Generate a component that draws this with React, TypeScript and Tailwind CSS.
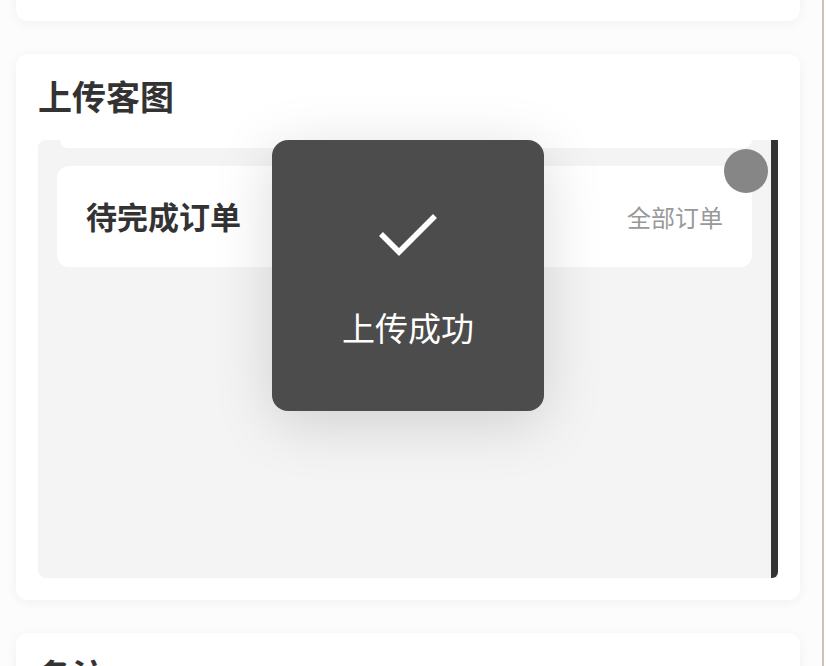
export default function App() {
  return (
    <div
      className="relative h-screen w-full overflow-hidden bg-[#fcfcfc] flex"
      style={{ fontFamily: '"Noto Sans CJK SC", "Noto Sans", sans-serif' }}
    >
      {/* 页面内容 */}
      <div className="w-[822px] flex flex-col gap-[33px] pl-4 pr-[22px] -mt-[179px]">
        {/* 上一张卡片，只露出底边 */}
        <div className="h-[200px] shrink-0 bg-white rounded-xl shadow-[0_2px_12px_rgba(0,0,0,0.05)]" />

        {/* 上传客图 */}
        <div className="shrink-0 bg-white rounded-xl shadow-[0_2px_12px_rgba(0,0,0,0.05)] pt-[22px] px-[22px] pb-[22px]">
          <h2 className="text-[34px] leading-[40px] font-bold text-[#333]">上传客图</h2>
          <div className="mt-[24px] h-[438px] flex rounded-l-lg overflow-hidden bg-[#f4f4f4]">
            <div className="flex-1 flex flex-col px-[19px]">
              <div className="h-[8px] ml-[3px] bg-white rounded-b-xl" />
              <div className="mt-[18px] h-[101px] bg-white rounded-xl flex items-center justify-between pl-[29px] pr-[29px]">
                <span className="text-[31px] font-bold text-[#333]">待完成订单</span>
                <span className="text-[24px] text-[#999]">全部订单</span>
              </div>
            </div>
            <div className="w-[7px] bg-[#333] rounded-br-md" />
          </div>
        </div>

        {/* 备注 */}
        <div className="h-[200px] shrink-0 bg-white rounded-xl shadow-[0_2px_12px_rgba(0,0,0,0.05)] pt-[22px] px-[22px]">
          <h2 className="text-[34px] leading-[40px] font-bold text-[#333]">备注</h2>
        </div>
      </div>

      {/* 页面滚动条边线 */}
      <div className="w-[2px] bg-[#cbc4b4]" />
      <div className="flex-1 bg-white" />

      {/* 悬浮按钮 */}
      <div className="absolute left-[724px] top-[149px] w-[44px] h-[44px] rounded-full bg-[#7f7f7f]/95" />

      {/* 上传成功提示 */}
      <div className="absolute left-[272px] top-[140px] w-[272px] h-[271px] rounded-2xl bg-[#4c4c4c] shadow-[0_12px_60px_rgba(0,0,0,0.15)] flex flex-col items-center">
        <svg width="70" height="50" viewBox="0 0 70 50" className="mt-[72px]">
          <path d="M8 22 L26 40 L62 4" fill="none" stroke="white" strokeWidth="5.5" strokeLinecap="butt" />
        </svg>
        <span className="mt-[45px] text-[33px] leading-[40px] text-white">上传成功</span>
      </div>
    </div>
  );
}
